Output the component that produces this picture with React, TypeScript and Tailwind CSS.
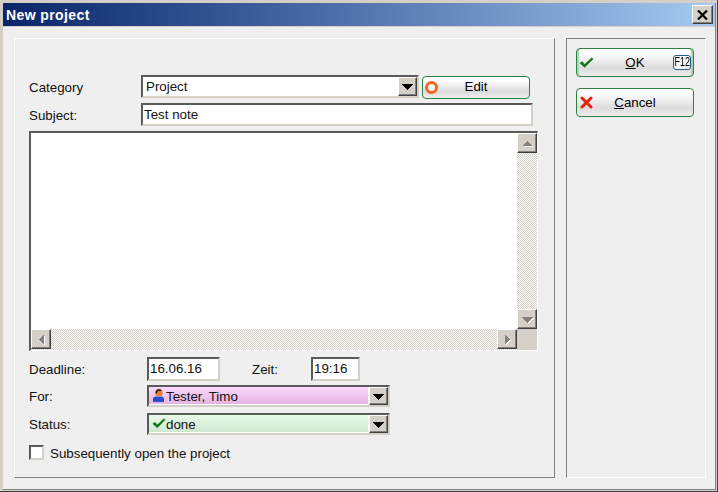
import React from "react";

const sunken = "border-2 border-t-[#5a5a5a] border-l-[#5a5a5a] border-r-[#d4d0c8] border-b-[#d4d0c8]";
const raised = "border-[1px] border-t-[#ffffff] border-l-[#ffffff] border-r-[#404040] border-b-[#404040] bg-[#d4d0c8] shadow-[inset_-1px_-1px_0_#808080]";

function Arrow({ d, fill = "#000", className = "" }: { d: "up" | "down" | "left" | "right"; fill?: string; className?: string }) {
  const pts = { up: "0,7 5.5,2 11,7", down: "0,2 11,2 5.5,8", left: "6,0 6,11 1,5.5", right: "1,0 1,11 6,5.5" }[d];
  const w = d === "up" || d === "down" ? 11 : 7;
  const h = d === "up" || d === "down" ? 9 : 11;
  return (
    <svg width={w} height={h} viewBox={`0 0 ${w} ${h}`} shapeRendering="crispEdges" className={className}>
      <polygon points={pts} fill={fill} />
    </svg>
  );
}

function DropBtn() {
  return (
    <div className={`w-[19px] h-full flex items-center justify-center shrink-0 ${raised}`}>
      <Arrow d="down" />
    </div>
  );
}

function ScrollBtn({ d }: { d: "up" | "down" | "left" | "right" }) {
  return (
    <div className={`w-5 h-5 flex items-center justify-center shrink-0 ${raised}`}>
      <Arrow d={d} fill="#808080" className="[filter:drop-shadow(1px_1px_0_#ffffff)]" />
    </div>
  );
}

function Check({ size = 16 }: { size?: number }) {
  return (
    <svg width={size} height={size * 0.75} viewBox="0 0 16 12">
      <path d="M1 6.5 L3.5 5 L6 8 L13.5 1 L15 2 L6 11 Z" fill="#0c7d12" stroke="#075c0c" strokeWidth="0.6" />
    </svg>
  );
}

function Btn({ icon, children, right, w = "w-[118px]", h = "h-[29px]", glow = false }: { icon: React.ReactNode; children: React.ReactNode; right?: React.ReactNode; w?: string; h?: string; glow?: boolean }) {
  return (
    <div className={`${w} ${h} relative flex items-center justify-center rounded-[4px] border border-[#2f8047] bg-gradient-to-b from-[#ffffff] from-[15%] via-[#dcdcdc] via-[70%] to-[#eeeeee] text-black ${glow ? "shadow-[inset_2px_0_0_#a8d8b0,inset_-2px_0_0_#a8d8b0]" : ""}`}>
      <div className="absolute left-[2px] top-0 bottom-0 flex items-center">{icon}</div>
      {children}
      {right && <div className="absolute right-[2px] top-0 bottom-0 flex items-center">{right}</div>}
    </div>
  );
}

export default function App() {
  return (
    <div className="w-[718px] h-[492px] overflow-hidden bg-[#d4d0c8] pl-[3px] pt-[3px] pr-[2px] pb-[2px] shadow-[inset_-1px_-1px_0_#404040] font-['Liberation_Sans',Arial,sans-serif] text-[13.33px] text-[#111]">
      <div className="w-full h-full flex flex-col bg-[#efefef] border-r border-b border-r-[#808080] border-b-[#808080]">
        <div className="h-6 shrink-0 flex items-center justify-between pl-[3px] pr-[2px] bg-gradient-to-r from-[#0a246a] to-[#a6caf0] border-b border-b-[#d4d0c8]">
          <span className="text-white font-bold text-[14px] tracking-[0.4px] pt-[2px]">New project</span>
          <div className={`w-[21px] h-[19px] flex items-center justify-center ${raised}`}>
            <svg width="11" height="10" viewBox="0 0 11 10">
              <path d="M1 0.5 L10 9.5 M10 0.5 L1 9.5" stroke="#000" strokeWidth="2.2" />
            </svg>
          </div>
        </div>
        <div className="flex-1 flex pl-[11px] pt-[11px] pb-[11px] gap-[11px]">
          <div className="w-[541px] h-[440px] border border-t-white border-l-white border-r-[#808080] border-b-[#808080] pl-[14px] pt-[36px] flex flex-col">
            <div className="flex h-[23px] items-center">
              <span className="w-[112px] pt-[2px]">Category</span>
              <div className={`w-[278px] h-[23px] flex bg-white ${sunken}`}>
                <span className="flex-1 pl-[3px] leading-[19px]">Project</span>
                <DropBtn />
              </div>
              <div className="ml-[3px] mt-[1px]">
                <Btn w="w-[108px]" h="h-[23px]" icon={
                  <span className="block w-[13px] h-[13px] rounded-full border-[3px] border-[#f4641e] bg-white" />
                }>
                  <span>Edit</span>
                </Btn>
              </div>
            </div>
            <div className="flex h-[23px] items-center mt-[5px]">
              <span className="w-[112px] pt-[2px]">Subject:</span>
              <div className={`w-[392px] h-[23px] bg-white pl-[1px] pt-[1px] leading-[18px] ${sunken}`}>Test note</div>
            </div>
            <div className="w-[509px] h-[220px] mt-[5px] flex flex-col bg-white border-t-2 border-l-2 border-r border-b border-t-[#5a5a5a] border-l-[#5a5a5a] border-r-white border-b-white">
              <div className="flex-1 flex min-h-0">
                <div className="flex-1" />
                <div className="w-5 flex flex-col bg-[repeating-conic-gradient(#ffffff_0_25%,#d4d0c8_0_50%)] bg-[length:2px_2px]">
                  <ScrollBtn d="up" />
                  <div className="flex-1" />
                  <ScrollBtn d="down" />
                </div>
              </div>
              <div className="h-[21px] flex shrink-0">
                <div className="flex-1 flex items-start bg-[repeating-conic-gradient(#ffffff_0_25%,#d4d0c8_0_50%)] bg-[length:2px_2px]">
                  <ScrollBtn d="left" />
                  <div className="flex-1" />
                  <ScrollBtn d="right" />
                </div>
                <div className="w-5 bg-[#d4d0c8]" />
              </div>
            </div>
            <div className="flex h-[24px] items-center mt-[6px]">
              <span className="w-[118px] pt-[2px]">Deadline:</span>
              <div className={`w-[73px] h-[24px] bg-white pl-[1px] pt-[1px] leading-[18px] ${sunken}`}>16.06.16</div>
              <span className="ml-[32px] w-[59px] pt-[2px]">Zeit:</span>
              <div className={`w-[49px] h-[24px] bg-white pl-[1px] pt-[1px] leading-[18px] ${sunken}`}>19:16</div>
            </div>
            <div className="flex h-[22px] items-center mt-[4px]">
              <span className="w-[118px] pt-[2px]">For:</span>
              <div className={`w-[243px] h-[22px] flex ${sunken}`}>
                <div className="flex-1 flex items-center pl-[3px] gap-[1px] bg-gradient-to-b from-[#fcd8fc] to-[#e6b4e2] border-r border-b border-white">
                  <svg width="13" height="15" viewBox="0 0 13 15">
                    <path d="M1 14 V11 Q1 8.5 4 8.5 H9 Q12 8.5 12 11 V14 Z" fill="#2a4fd0" />
                    <circle cx="7" cy="5" r="3.6" fill="#f08030" />
                    <path d="M3.4 5 Q3.5 1 7 1 Q9.5 1 10 3 L6 3 Q5 5 4.5 6 Z" fill="#3a2a1a" />
                  </svg>
                  <span className="leading-[17px] pt-[2px]">Tester, Timo</span>
                </div>
                <DropBtn />
              </div>
            </div>
            <div className="flex h-[22px] items-center mt-[6px]">
              <span className="w-[118px] pt-[2px]">Status:</span>
              <div className={`w-[243px] h-[22px] flex ${sunken}`}>
                <div className="flex-1 flex items-center pl-[3px] bg-gradient-to-b from-[#e8fce8] to-[#cfe8d2] border-r border-b border-white">
                  <Check size={14} />
                  <span className="leading-[17px] pt-[2px]">done</span>
                </div>
                <DropBtn />
              </div>
            </div>
            <div className="flex items-center mt-[10px] h-[15px]">
              <div className={`w-[15px] h-[15px] bg-white ${sunken}`} />
              <span className="ml-[6px] pt-[3px]">Subsequently open the project</span>
            </div>
          </div>
          <div className="w-[140px] h-[440px] border border-t-[#808080] border-l-[#808080] border-r-white border-b-white pl-[9px] pt-[9px] flex flex-col gap-[11px]">
            <Btn glow icon={<Check size={15} />} right={
              <span className="flex items-center justify-center w-[18px] h-[15px] rounded-[3px] border border-[#2a5a8c] bg-[#f4f4f4]">
                <span className="inline-block text-[12px] leading-[13px] scale-x-[0.75]">F12</span>
              </span>
            }>
              <span><span className="underline">O</span>K</span>
            </Btn>
            <Btn icon={
              <svg width="13" height="13" viewBox="0 0 13 13" className="ml-[1px]">
                <path d="M2 2 L11 11 M11 2 L2 11" stroke="#e8200c" strokeWidth="3" strokeLinecap="round" />
              </svg>
            }>
              <span><span className="underline">C</span>ancel</span>
            </Btn>
          </div>
        </div>
      </div>
    </div>
  );
}
